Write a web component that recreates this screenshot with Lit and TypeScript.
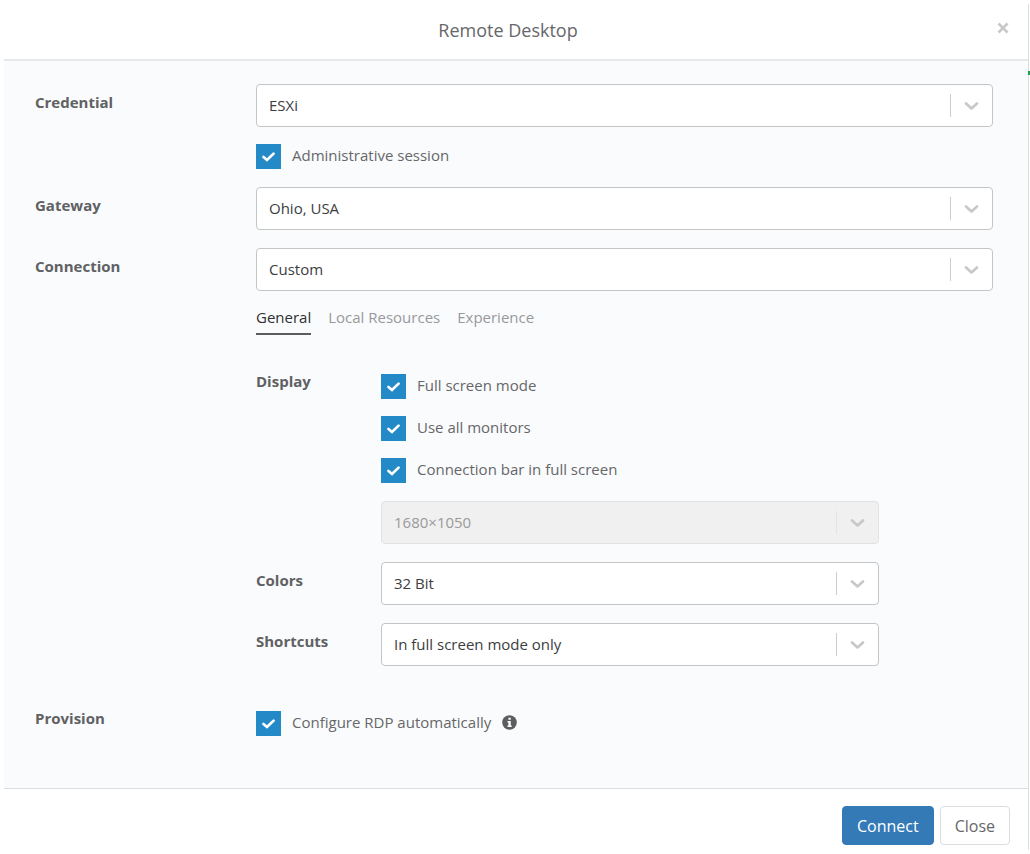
import { LitElement, html, css, svg, nothing } from "lit";
import { customElement, property, state } from "lit/decorators.js";
import { classMap } from "lit/directives/class-map.js";

@customElement("select-field")
class SelectField extends LitElement {
  @property() label = "";
  @property({ type: Array }) options: string[] = [];
  @property({ type: Boolean }) disabled = false;

  static styles = css`
    :host {
      display: grid;
      grid-template-columns: 221px minmax(0, 1fr);
    }
    :host([nested]) {
      grid-template-columns: 125px minmax(0, 1fr);
    }
    :host([bare]) {
      grid-template-columns: minmax(0, 1fr);
    }
    .label {
      padding-top: 7px;
      font-weight: 700;
      color: #606163;
    }
    .box {
      position: relative;
      display: flex;
    }
    .select {
      appearance: none;
      box-sizing: border-box;
      width: 100%;
      height: 43px;
      margin: 0;
      padding: 0 56px 2px 12px;
      border: 1px solid #c4c5c6;
      border-radius: 4px;
      background: #fff;
      color: #3c3d3f;
      font: inherit;
      outline-offset: 1px;
    }
    .select:disabled {
      background: #f0f0f0;
      border-color: #e2e2e3;
      color: #9a9a9b;
      opacity: 1;
    }
    .arrow {
      position: absolute;
      inset: 10px 1px 10px auto;
      width: 41px;
      display: grid;
      place-items: center;
      border-left: 1px solid #cccccd;
      pointer-events: none;
    }
    .select:disabled + .arrow {
      border-color: #e4e4e5;
    }
  `;

  render() {
    return html`
      ${this.label ? html`<label class="label" for="control">${this.label}</label>` : nothing}
      <div class="box">
        <select
          class="select"
          id="control"
          ?disabled=${this.disabled}
          aria-label=${this.label ? nothing : "Resolution"}
        >
          ${this.options.map((o) => html`<option>${o}</option>`)}
        </select>
        <span class="arrow" aria-hidden="true">
          <svg width="16" height="10" viewBox="0 0 16 10">
            <path d="M2 2.400 7.500 7.400 13 2.400" fill="none" stroke="#c8c8c9" stroke-width="2.700" stroke-linecap="round" stroke-linejoin="round" />
          </svg>
        </span>
      </div>
    `;
  }
}

@customElement("check-field")
class CheckField extends LitElement {
  @property() label = "";

  static styles = css`
    :host {
      display: flex;
      gap: 11px;
      height: 25px;
      color: #666769;
    }
    .box {
      display: grid;
      width: 25px;
      height: 25px;
    }
    .input,
    .tick {
      grid-area: 1 / 1;
    }
    .input {
      appearance: none;
      box-sizing: border-box;
      width: 25px;
      height: 25px;
      margin: 0;
      border: 1px solid #c4c5c6;
      background: #fff;
    }
    .input:checked {
      border-color: #2389c7;
      background: #2389c7;
    }
    .tick {
      pointer-events: none;
    }
  `;

  render() {
    return html`
      <span class="box">
        <input class="input" id="control" type="checkbox" checked />
        <svg class="tick" width="25" height="25" viewBox="0 0 25 25" aria-hidden="true">
          <path d="M7.500 13 11 16 17.600 9.600" fill="none" stroke="#fff" stroke-width="2.700" stroke-linecap="round" stroke-linejoin="miter" />
        </svg>
      </span>
      <label for="control">${this.label}</label>
      <slot></slot>
    `;
  }
}

const infoIcon = svg`
  <circle cx="7.500" cy="7.500" r="7.300" fill="#5c5d5f" />
  <path d="M6.400 2.700h2.400v2.100H6.400zM5.500 6h3.300v4.500h.9v1.500H5.500v-1.500h.9V7.500h-.9z" fill="#fafbfd" />
`;

@customElement("app-root")
class AppRoot extends LitElement {
  @state() private tab = "General";

  static styles = css`
    :host {
      display: block;
      position: relative;
      box-sizing: border-box;
      min-height: 100vh;
      padding: 4px 1px 4px 4px;
      background: #fff;
      font: 15px/22px "Open Sans", "Noto Sans", sans-serif;
      color: #666769;
    }
    .backdrop-mark {
      position: absolute;
      top: 71px;
      right: 0;
      width: 2px;
      height: 4px;
      background: #1ea34a;
    }
    .dialog {
      border-right: 1px solid #dcdddf;
    }
    .header {
      display: grid;
      grid-template-columns: 32px 1fr 48px;
      align-items: start;
      height: 55px;
      border-bottom: 2px solid #e7e8ea;
    }
    .title {
      grid-column: 2;
      margin: 0;
      padding-top: 13px;
      font-size: 18px;
      line-height: 26px;
      font-weight: 400;
      text-align: center;
      color: #666769;
    }
    .dismiss {
      display: grid;
      place-items: center;
      width: 30px;
      height: 30px;
      margin: 9px 0 0 8px;
      padding: 0;
      border: 0;
      background: none;
      cursor: pointer;
    }
    .body {
      display: flex;
      flex-direction: column;
      gap: 18px;
      padding: 23px 35px 52px 31px;
      background: #fafbfd;
    }
    .stack {
      display: flex;
      flex-direction: column;
      gap: 17px;
    }
    .indent {
      padding-left: 221px;
    }
    .tabs {
      display: flex;
      gap: 17px;
    }
    .tab {
      padding: 0 0 7px;
      border: 0;
      border-bottom: 2px solid transparent;
      background: none;
      font: inherit;
      line-height: 18px;
      color: #98999b;
      cursor: pointer;
    }
    .tab.active {
      border-color: #5c5d5f;
      color: #2e2f31;
    }
    .panel {
      display: flex;
      flex-direction: column;
      gap: 18px;
      padding: 11px 114px 0 0;
    }
    .group {
      display: grid;
      grid-template-columns: 125px minmax(0, 1fr);
    }
    .provision {
      display: grid;
      grid-template-columns: 221px minmax(0, 1fr);
      padding-top: 16px;
    }
    .legend {
      padding-top: 7px;
      font-weight: 700;
      color: #606163;
    }
    .checks {
      display: flex;
      flex-direction: column;
      gap: 17px;
      padding-top: 11px;
    }
    .resolution {
      padding-left: 125px;
    }
    .info {
      margin-top: 4px;
    }
    .footer {
      display: flex;
      justify-content: flex-end;
      gap: 6px;
      padding: 17px 18px 5px;
      border-top: 1px solid #dcdde1;
    }
    .button {
      height: 39px;
      padding: 0 14px;
      border: 1px solid #dcdddf;
      border-radius: 4px;
      background: #fff;
      color: #666769;
      font: 16px/22px "Open Sans", "Noto Sans", sans-serif;
      cursor: pointer;
    }
    .button.primary {
      border-color: #337ab7;
      background: #337ab7;
      color: #fff;
    }
  `;

  render() {
    return html`
      <span class="backdrop-mark" aria-hidden="true"></span>
      <section class="dialog" role="dialog" aria-labelledby="title">
        <header class="header">
          <h1 class="title" id="title">Remote Desktop</h1>
          <button class="dismiss" aria-label="Dismiss">
            <svg width="12" height="12" viewBox="0 0 12 12">
              <path d="m1.500 1.500 9 9M10.500 1.500l-9 9" fill="none" stroke="#c8c8c9" stroke-width="2.600" />
            </svg>
          </button>
        </header>
        <main class="body">
          <div class="stack">
            <select-field label="Credential" .options=${["ESXi"]}></select-field>
            <check-field class="indent" label="Administrative session"></check-field>
          </div>
          <select-field label="Gateway" .options=${["Ohio, USA"]}></select-field>
          <div class="stack">
            <select-field label="Connection" .options=${["Custom"]}></select-field>
            <div class="indent">
              <div class="tabs" role="tablist">
                ${["General", "Local Resources", "Experience"].map(
                  (name) => html`<button
                    role="tab"
                    class=${classMap({ tab: true, active: this.tab === name })}
                    aria-selected=${this.tab === name ? "true" : "false"}
                    @click=${() => (this.tab = name)}
                  >${name}</button>`
                )}
              </div>
            </div>
            <div class="indent">
              <div class="panel" role="tabpanel">
                <div class="group" role="group" aria-labelledby="display">
                  <span class="legend" id="display">Display</span>
                  <div class="checks">
                    <check-field label="Full screen mode"></check-field>
                    <check-field label="Use all monitors"></check-field>
                    <check-field label="Connection bar in full screen"></check-field>
                  </div>
                </div>
                <select-field class="resolution" bare disabled .options=${["1680×1050"]}></select-field>
                <select-field nested label="Colors" .options=${["32 Bit"]}></select-field>
                <select-field nested label="Shortcuts" .options=${["In full screen mode only"]}></select-field>
              </div>
            </div>
          </div>
          <div class="provision" role="group" aria-labelledby="provision">
            <span class="legend" id="provision">Provision</span>
            <div class="checks">
              <check-field label="Configure RDP automatically">
                <svg class="info" width="15" height="15" viewBox="0 0 15 15" aria-hidden="true">${infoIcon}</svg>
              </check-field>
            </div>
          </div>
        </main>
        <footer class="footer">
          <button class="button primary">Connect</button>
          <button class="button">Close</button>
        </footer>
      </section>
    `;
  }
}
